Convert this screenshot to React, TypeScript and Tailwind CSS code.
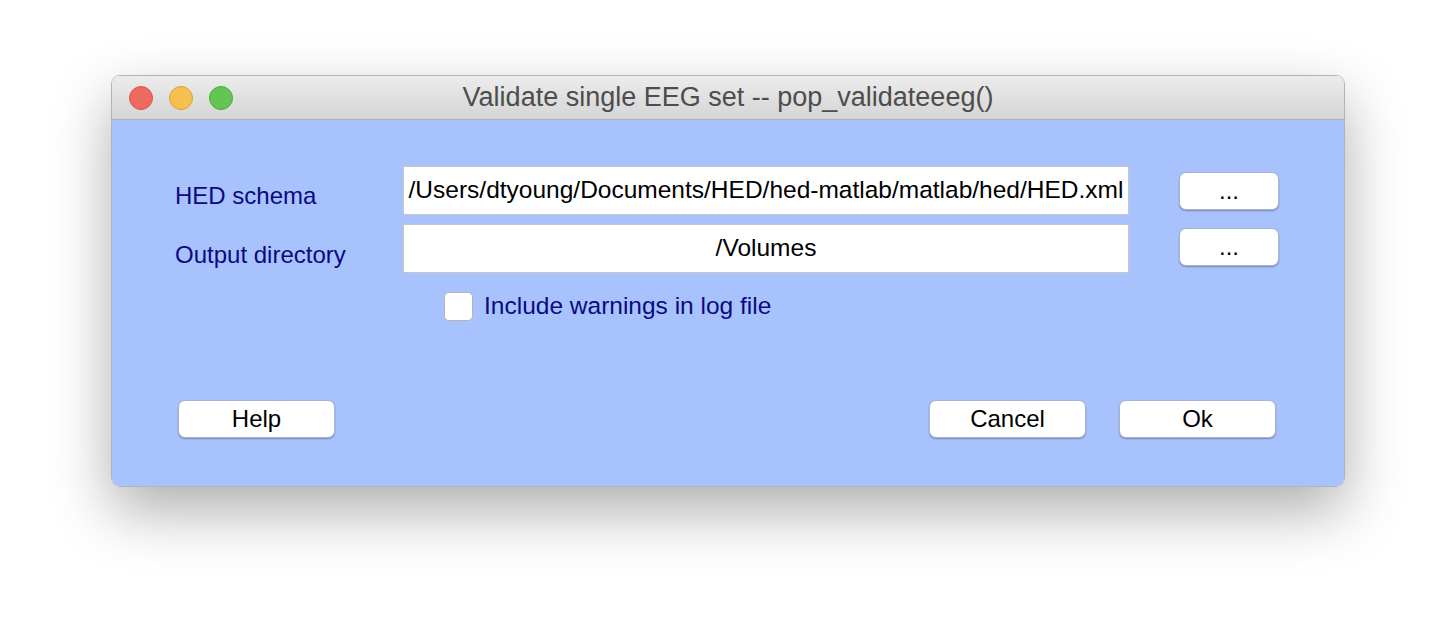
const font = { fontFamily: '"Liberation Sans", Arial, sans-serif' }

function MacButton({ label, className = '' }: { label: string; className?: string }) {
  return (
    <div
      className={`h-[38px] rounded-[7px] bg-white border border-[#a9b4cb] shadow-[0_1px_1.5px_rgba(0,0,0,0.3)] flex items-center justify-center text-[24px] text-black leading-none ${className}`}
    >
      {label}
    </div>
  )
}

function Field({ value }: { value: string }) {
  return (
    <div className="w-[726px] h-[49px] bg-white border border-[#c6c6c6] flex items-center justify-center text-[24.5px] text-black leading-none whitespace-nowrap overflow-hidden">
      {value}
    </div>
  )
}

export default function App() {
  return (
    <div className="w-full h-[634px] bg-white pt-[75px] pl-[111px]" style={font}>
      <div className="w-[1234px] h-[412px] rounded-[9px] border border-[#b3b3b3] overflow-hidden shadow-[0_24px_60px_rgba(0,0,0,0.32)] flex flex-col">
        {/* title bar */}
        <div className="h-[44px] shrink-0 bg-gradient-to-b from-[#ececec] to-[#d5d5d5] border-b border-[#b1b1b1] flex items-center relative">
          <div className="flex items-center gap-4 pl-[17px]">
            <span className="size-6 rounded-full bg-[#ee6a5f] border border-[#d35a4e]" />
            <span className="size-6 rounded-full bg-[#f6bf50] border border-[#d9a33e]" />
            <span className="size-6 rounded-full bg-[#62c554] border border-[#4ea73f]" />
          </div>
          <div className="absolute inset-0 flex items-center justify-center text-[27px] text-[#4d4d4d] pointer-events-none">
            Validate single EEG set -- pop_validateeeg()
          </div>
        </div>

        {/* content */}
        <div className="flex-1 bg-[#a8c2fe] flex flex-col pl-[63px] pt-[46px]">
          <div className="flex items-center">
            <span className="w-[228px] pt-[10px] text-[24px] text-[#0a0a80]">HED schema</span>
            <Field value="/Users/dtyoung/Documents/HED/hed-matlab/matlab/hed/HED.xml" />
            <MacButton label="..." className="ml-[50px] w-[100px]" />
          </div>
          <div className="flex items-center mt-[8px]">
            <span className="w-[228px] pt-[14px] text-[24px] text-[#0a0a80]">Output directory</span>
            <Field value="/Volumes" />
            <MacButton label="..." className="ml-[50px] w-[100px] -mt-[2px]" />
          </div>
          <div className="flex items-center mt-[15px] pl-[269px]">
            <span className="size-[29px] rounded-[5px] bg-white border border-[#b5b5b5]" />
            <span className="ml-[11px] text-[24.5px] text-[#0a0a80]">Include warnings in log file</span>
          </div>
          <div className="flex items-center mt-[75px] pl-[3px] pr-[68px]">
            <MacButton label="Help" className="w-[157px]" />
            <MacButton label="Cancel" className="w-[157px] ml-auto" />
            <MacButton label="Ok" className="w-[157px] ml-[33px]" />
          </div>
        </div>
      </div>
    </div>
  )
}
